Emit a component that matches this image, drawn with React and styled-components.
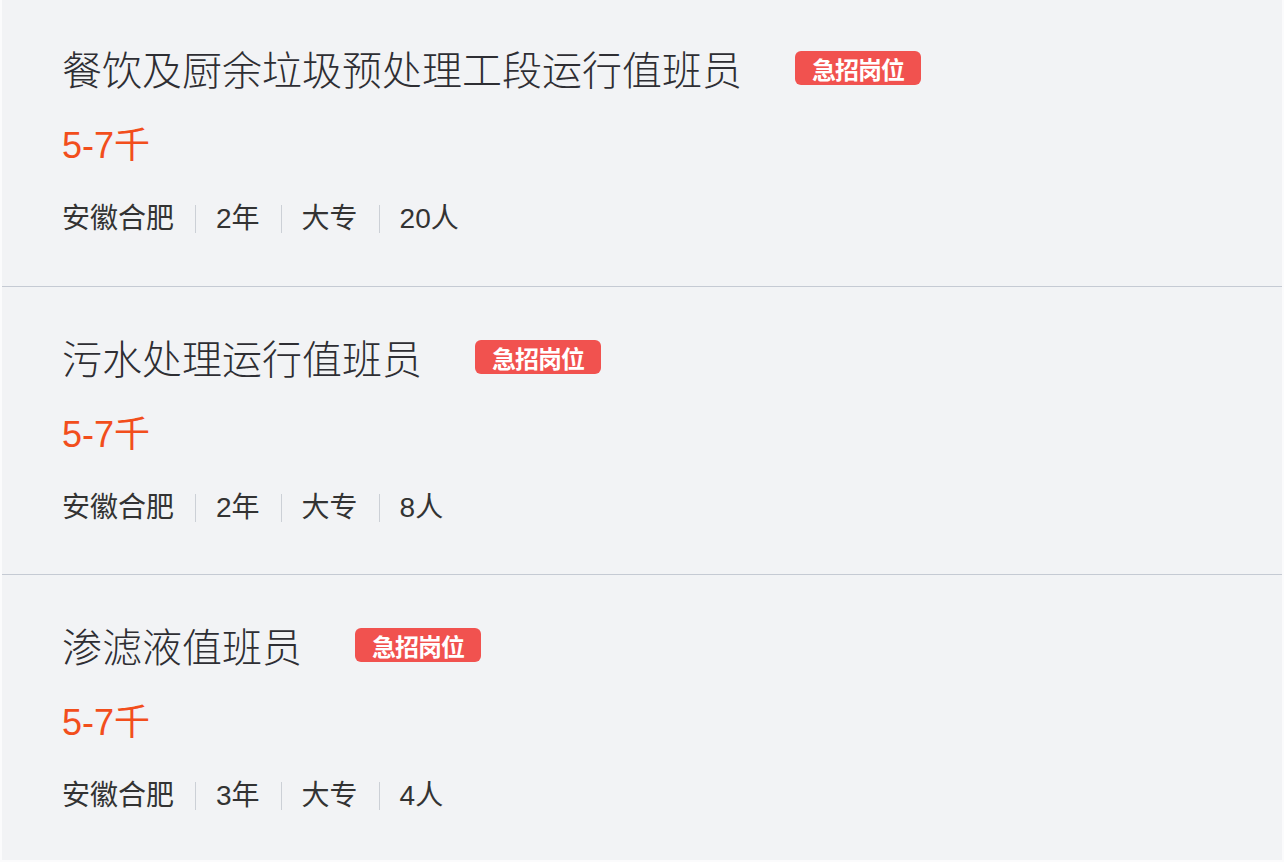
import styled, { createGlobalStyle } from "styled-components"

const GlobalStyle = createGlobalStyle`
  html, body {
    margin: 0;
    background: #fbfbfc;
  }
  body {
    font-family: "Liberation Sans", "Noto Sans CJK SC", sans-serif;
  }
`

const jobs = [
  { title: "餐饮及厨余垃圾预处理工段运行值班员", salary: "5-7千", meta: ["安徽合肥", "2年", "大专", "20人"] },
  { title: "污水处理运行值班员", salary: "5-7千", meta: ["安徽合肥", "2年", "大专", "8人"] },
  { title: "渗滤液值班员", salary: "5-7千", meta: ["安徽合肥", "3年", "大专", "4人"] },
]

const App = () => {
  return (
    <>
      <GlobalStyle />
      <JobList>
        {jobs.map((job, i) => (
          <JobCard key={i}>
            <TitleRow>
              <Title>{job.title}</Title>
              <Badge>急招岗位</Badge>
            </TitleRow>
            <Salary>{job.salary}</Salary>
            <Meta>
              {job.meta.map((m, j) => (
                <MetaItem key={j}>{m}</MetaItem>
              ))}
            </Meta>
          </JobCard>
        ))}
      </JobList>
    </>
  )
}

const JobList = styled.main`
  margin: 0 2px;
  background: #f2f3f5;
  height: 860px;
  overflow: hidden;
`

const JobCard = styled.section`
  display: flex;
  flex-direction: column;
  height: 288px;
  box-sizing: border-box;
  padding: 46px 0 0 60px;
  border-bottom: 1px solid #c5cad3;

  &:first-child {
    height: 287px;
    padding-top: 44px;
  }
`

const TitleRow = styled.div`
  display: flex;
  align-items: center;
  height: 48px;
`

const Title = styled.h2`
  margin: 0;
  font-family: "Noto Sans CJK SC", sans-serif;
  font-weight: 300;
  font-size: 40px;
  line-height: 48px;
  color: #2e2e33;
`

const Badge = styled.span`
  margin-left: 53px;
  display: inline-flex;
  align-items: center;
  justify-content: center;
  width: 126px;
  height: 34px;
  border-radius: 6px;
  background: #f1524f;
  color: #fff;
  font-family: "Noto Sans CJK SC", sans-serif;
  font-weight: 700;
  font-size: 24px;
  letter-spacing: -1px;
`

const Salary = styled.div`
  margin-top: 32px;
  font-size: 36px;
  line-height: 44px;
  color: #f24e1c;
`

const Meta = styled.div`
  margin-top: 33px;
  display: flex;
  align-items: center;
  height: 36px;
`

const MetaItem = styled.span`
  font-size: 28px;
  line-height: 36px;
  color: #333;
  padding: 0 21px;
  position: relative;

  &:first-child {
    padding-left: 0;
  }

  /* divider between items */
  & + &::before {
    content: "";
    position: absolute;
    left: 0;
    top: 4px;
    height: 28px;
    border-left: 1px solid #ccd0d6;
  }
`

export default App
